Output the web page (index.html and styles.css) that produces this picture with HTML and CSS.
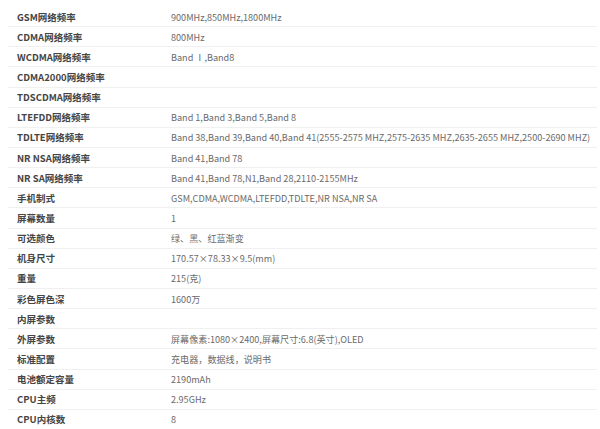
FILE: index.html
```html
<!DOCTYPE html>
<html lang="zh-CN">
<head>
<meta charset="UTF-8">
<title>参数</title>
<link rel="stylesheet" href="styles.css">
</head>
<body>

<!-- ===== SPEC TABLE ===== -->
<div class="specList">
  <div class="row"><div class="label">GSM网络频率</div><div class="value">900MHz,850MHz,1800MHz</div></div>
  <div class="row"><div class="label">CDMA网络频率</div><div class="value">800MHz</div></div>
  <div class="row"><div class="label">WCDMA网络频率</div><div class="value">Band Ⅰ,Band8</div></div>
  <div class="row"><div class="label">CDMA2000网络频率</div><div class="value"></div></div>
  <div class="row"><div class="label">TDSCDMA网络频率</div><div class="value"></div></div>
  <div class="row"><div class="label">LTEFDD网络频率</div><div class="value">Band 1,Band 3,Band 5,Band 8</div></div>
  <div class="row"><div class="label">TDLTE网络频率</div><div class="value">Band 38,Band 39,Band 40,Band 41(2555-2575 MHZ,2575-2635 MHZ,2635-2655 MHZ,2500-2690 MHZ)</div></div>
  <div class="row"><div class="label">NR NSA网络频率</div><div class="value">Band 41,Band 78</div></div>
  <div class="row"><div class="label">NR SA网络频率</div><div class="value">Band 41,Band 78,N1,Band 28,2110-2155MHz</div></div>
  <div class="row"><div class="label">手机制式</div><div class="value">GSM,CDMA,WCDMA,LTEFDD,TDLTE,NR NSA,NR SA</div></div>
  <div class="row"><div class="label">屏幕数量</div><div class="value">1</div></div>
  <div class="row"><div class="label">可选颜色</div><div class="value">绿、黑、红蓝渐变</div></div>
  <div class="row"><div class="label">机身尺寸</div><div class="value">170.57×78.33×9.5(mm)</div></div>
  <div class="row"><div class="label">重量</div><div class="value">215(克)</div></div>
  <div class="row"><div class="label">彩色屏色深</div><div class="value">1600万</div></div>
  <div class="row"><div class="label">内屏参数</div><div class="value"></div></div>
  <div class="row"><div class="label">外屏参数</div><div class="value">屏幕像素:1080×2400,屏幕尺寸:6.8(英寸),OLED</div></div>
  <div class="row"><div class="label">标准配置</div><div class="value">充电器，数据线，说明书</div></div>
  <div class="row"><div class="label">电池额定容量</div><div class="value">2190mAh</div></div>
  <div class="row"><div class="label">CPU主频</div><div class="value">2.95GHz</div></div>
  <div class="row"><div class="label">CPU内核数</div><div class="value">8</div></div>
</div>

</body>
</html>
```

FILE: styles.css
```css
body {
  margin: 0;
  padding: 7px 3px 0 8px;
  background: white;
  font-family: "Noto Sans CJK SC", "Noto Sans", sans-serif;
  font-size: 9.5px;
}

/* ===== SPEC TABLE ===== */
.specList {
  display: flex;
  flex-direction: column;
}

.row {
  display: flex;
  align-items: center;
  height: 19.15px;
  border-bottom: 1px solid #f0f0f0;
}

.label {
  width: 154px;
  padding-left: 9px;
  color: #454545;
  font-weight: bold;
  flex-shrink: 0;
}

.value {
  color: #6a6a6a;
  font-size: 9.1px;
  white-space: nowrap;
}
```
